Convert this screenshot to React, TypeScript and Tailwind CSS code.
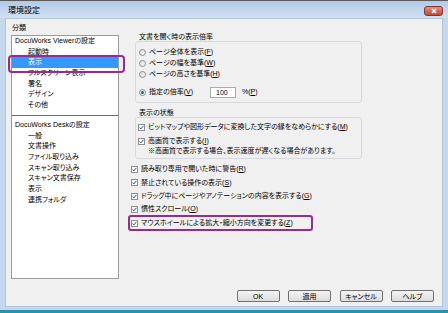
import React from "react";

type Item = { label: string; indent?: boolean; selected?: boolean };

const viewerItems: Item[] = [
  { label: "DocuWorks Viewerの設定" },
  { label: "起動時", indent: true },
  { label: "表示", indent: true, selected: true },
  { label: "フルスクリーン表示", indent: true },
  { label: "署名", indent: true },
  { label: "デザイン", indent: true },
  { label: "その他", indent: true },
];

const deskItems: Item[] = [
  { label: "DocuWorks Deskの設定" },
  { label: "一般", indent: true },
  { label: "文書操作", indent: true },
  { label: "ファイル取り込み", indent: true },
  { label: "スキャン取り込み", indent: true },
  { label: "スキャン文書保存", indent: true },
  { label: "表示", indent: true },
  { label: "連携フォルダ", indent: true },
];

function Key({ k }: { k: string }) {
  return (
    <span>
      (<span className="underline">{k}</span>)
    </span>
  );
}

function Row({ item }: { item: Item }) {
  return (
    <div
      className={`h-[10.7px] leading-[10.7px] whitespace-nowrap ${item.indent ? "pl-[16px]" : "pl-[3px]"} ${
        item.selected ? "bg-[#3399ff] text-white" : ""
      }`}
    >
      {item.label}
    </div>
  );
}

function Radio({ checked }: { checked?: boolean }) {
  return (
    <span className="w-[7px] h-[7px] rounded-full border border-[#8c8c8c] bg-linear-to-br from-[#dcdcdc] to-[#fafafa] flex items-center justify-center shrink-0">
      {checked && <span className="w-[3px] h-[3px] rounded-full bg-[#1f5fb6]" />}
    </span>
  );
}

function Check() {
  return (
    <span className="w-[7px] h-[7px] border border-[#8e8f8f] bg-white shrink-0 flex items-center justify-center">
      <svg viewBox="0 0 5 5" className="w-[5px] h-[5px]">
        <path d="M0.6 2.6 L1.9 3.9 L4.4 0.8" stroke="#2a4f93" strokeWidth="1" fill="none" />
      </svg>
    </span>
  );
}

function Btn({ label }: { label: string }) {
  return (
    <div className="w-[43px] h-[12px] border border-[#707070] rounded-[2px] bg-linear-to-b from-[#f4f4f4] to-[#dcdcdc] flex items-center justify-center leading-none">
      {label}
    </div>
  );
}

export default function App() {
  return (
    <div className="w-[448px] h-[313px] overflow-hidden flex flex-col bg-[#c6d8ed] border-t border-[#5b5b5b] text-[7px] text-black [font-family:'Liberation_Sans','Noto_Sans_CJK_JP',sans-serif] [font-feature-settings:'palt']">
      {/* title bar */}
      <div className="h-[17px] shrink-0 flex items-center justify-between pl-[8px] pr-[5px] pt-[4px] pb-[1px] bg-linear-to-b from-[#b2c9e5] to-[#d3e2f3]">
        <span className="text-[8px] leading-none">環境設定</span>
        <div className="w-[19px] h-[10px] rounded-[3px] border border-[#7a3a33] bg-linear-to-b from-[#e08f83] to-[#c2473a] flex items-center justify-center">
          <svg viewBox="0 0 6 6" className="w-[6px] h-[6px]">
            <path d="M1 1 L5 5 M5 1 L1 5" stroke="white" strokeWidth="1.4" />
          </svg>
        </div>
      </div>

      {/* client */}
      <div className="mx-[5px] h-[289px] shrink-0 bg-[#f0f0f0] border border-[#b3c6dc] flex flex-col">
        <div className="flex items-start">
          {/* left: 分類 */}
          <div className="ml-[5px] pt-[4px] flex flex-col">
            <div className="h-[10px] leading-[10px] pl-[1px]">分類</div>
            <div className="relative mt-[2px] w-[108px] h-[244px] border border-[#9a9a9a] bg-white">
              {viewerItems.map((it) => (
                <Row key={it.label} item={it} />
              ))}
              <div className="mt-[4px] mb-[4px] h-[1px] bg-[#6d6d6d]" />
              {deskItems.map((it, i) => (
                <Row key={it.label + i} item={it} />
              ))}
              <div className="absolute left-[-4px] top-[19px] w-[117px] h-[18px] border-2 border-[#9c2a8e] rounded-[4px]" />
            </div>
          </div>

          {/* right */}
          <div className="ml-[12px] pt-[13px] flex flex-col">
            <div className="ml-[8px] h-[9px] leading-[9px] whitespace-nowrap">文書を開く時の表示倍率</div>
            <div className="ml-[4px] w-[227px] border border-[#d5d9de] rounded-[3px] pt-[5px] pb-[4px] pl-[3px] flex flex-col">
              <div className="h-[11px] flex items-center gap-[3px] whitespace-nowrap">
                <Radio />
                <span>
                  ページ全体を表示<Key k="F" />
                </span>
              </div>
              <div className="h-[11px] flex items-center gap-[3px] whitespace-nowrap">
                <Radio />
                <span>
                  ページの幅を基準<Key k="W" />
                </span>
              </div>
              <div className="h-[11px] flex items-center gap-[3px] whitespace-nowrap">
                <Radio />
                <span>
                  ページの高さを基準<Key k="H" />
                </span>
              </div>
              <div className="mt-[6px] h-[12px] flex items-center whitespace-nowrap">
                <Radio checked />
                <span className="ml-[3px] w-[61px]">
                  指定の倍率<Key k="V" />
                </span>
                <div className="w-[26px] h-[11px] border border-[#a5acb5] bg-white pl-[5px] flex items-center leading-none">
                  100
                </div>
                <span className="ml-[6px]">
                  %<Key k="P" />
                </span>
              </div>
            </div>

            <div className="ml-[8px] mt-[5px] h-[9px] leading-[9px] whitespace-nowrap">表示の状態</div>
            <div className="ml-[4px] w-[227px] border border-[#d5d9de] rounded-[3px] pt-[4px] pb-[2px] pl-[2px] flex flex-col">
              <div className="h-[10px] flex items-center gap-[3px] whitespace-nowrap">
                <Check />
                <span>
                  ビットマップや図形データに変換した文字の縁をなめらかにする<Key k="M" />
                </span>
              </div>
              <div className="mt-[4px] h-[10px] flex items-center gap-[3px] whitespace-nowrap">
                <Check />
                <span>
                  高画質で表示する<Key k="I" />
                </span>
              </div>
              <div className="h-[10px] leading-[10px] pl-[10px] whitespace-nowrap">
                ※高画質で表示する場合、表示速度が遅くなる場合があります。
              </div>
            </div>

            <div className="mt-[3.8px] flex flex-col">
              <div className="h-[13.4px] flex items-center gap-[3px] whitespace-nowrap">
                <Check />
                <span>
                  読み取り専用で開いた時に警告<Key k="R" />
                </span>
              </div>
              <div className="h-[13.4px] flex items-center gap-[3px] whitespace-nowrap">
                <Check />
                <span>
                  禁止されている操作の表示<Key k="S" />
                </span>
              </div>
              <div className="h-[13.4px] flex items-center gap-[3px] whitespace-nowrap">
                <Check />
                <span>
                  ドラッグ中にページやアノテーションの内容を表示する<Key k="G" />
                </span>
              </div>
              <div className="h-[13.4px] flex items-center gap-[3px] whitespace-nowrap">
                <Check />
                <span>
                  慣性スクロール<Key k="O" />
                </span>
              </div>
              <div className="relative h-[13.4px] flex items-center gap-[3px] whitespace-nowrap">
                <Check />
                <span>
                  マウスホイールによる拡大・縮小方向を変更する<Key k="Z" />
                </span>
                <div className="absolute left-[-3px] top-[-1.4px] w-[185px] h-[16px] border-2 border-[#9c2a8e] rounded-[3px]" />
              </div>
            </div>
          </div>
        </div>

        {/* buttons */}
        <div className="mt-auto pb-[4px] pr-[8px] flex justify-end gap-[8.5px]">
          <Btn label="OK" />
          <Btn label="適用" />
          <Btn label="キャンセル" />
          <Btn label="ヘルプ" />
        </div>
      </div>

      <div className="h-[3px] shrink-0" />
      <div className="h-[3px] shrink-0 bg-[#2f8fae]" />
    </div>
  );
}
